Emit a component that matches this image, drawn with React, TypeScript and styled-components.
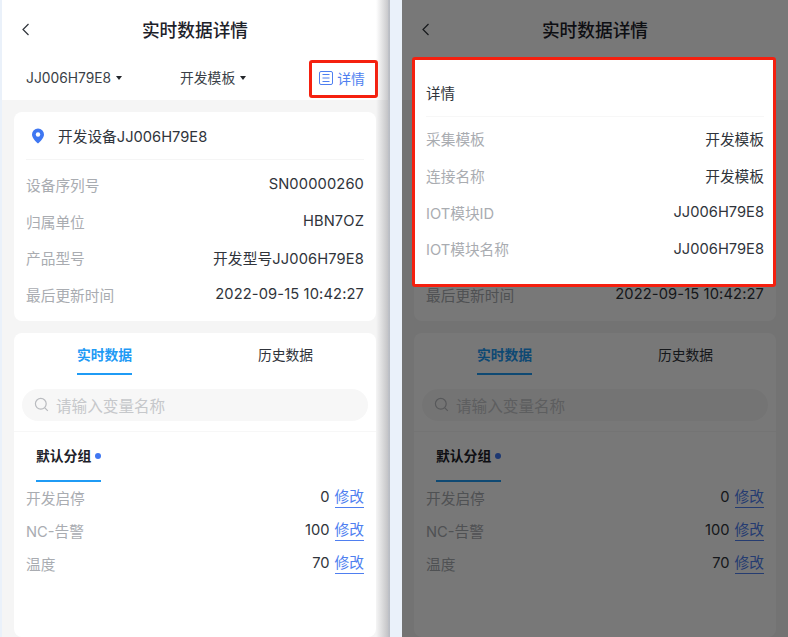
import { type FC } from "react";
import styled, { createGlobalStyle } from "styled-components";

const GlobalStyle = createGlobalStyle`
  html, body {
    margin: 0;
    padding: 0;
    width: 788px;
    height: 637px;
    overflow: hidden;
    background: #eaf1fa;
    font-family: Inter, "Noto Sans CJK SC", "Noto Sans", sans-serif;
  }
`;

const Screens = styled.div`
  display: flex;
  gap: 14px;
  height: 637px;
  padding-left: 2px;
`;

const Phone = styled.div`
  position: relative;
  width: 386px;
  height: 637px;
  flex: none;
  background: #f5f5f5;
  display: flex;
  flex-direction: column;
`;

const RightShade = styled.div`
  position: absolute;
  top: 0;
  right: -2px;
  width: 14px;
  height: 100%;
  background: linear-gradient(90deg, rgba(150, 150, 155, 0), rgba(150, 150, 155, 0.6));
`;

const Head = styled.div`
  background: #fff;
  flex: none;
`;

const TitleBar = styled.div`
  height: 58px;
  display: flex;
  align-items: center;
  justify-content: center;
  position: relative;
`;

const BackIcon = styled.svg`
  position: absolute;
  left: 19px;
  top: 23px;
  width: 10px;
  height: 13px;
`;

const Title = styled.div`
  font-size: 17.7px;
  font-weight: 500;
  color: #1d2129;
`;

const FilterBar = styled.div`
  height: 42px;
  display: flex;
  align-items: center;
  padding-left: 24px;
  padding-right: 10px;
`;

const Filter = styled.div<{ $width: number }>`
  width: ${({ $width }) => $width}px;
  display: flex;
  align-items: center;
  gap: 5px;
  font-size: 13.8px;
  line-height: 20px;
  margin-top: -2px;
  color: #3a3f47;
`;

const Caret = styled.span`
  width: 0;
  height: 0;
  border-left: 3px solid transparent;
  border-right: 3px solid transparent;
  border-top: 4px solid #23262b;
`;

const DetailButton = styled.div<{ $marked?: boolean }>`
  margin-left: auto;
  width: 69px;
  height: 38px;
  box-sizing: border-box;
  border: 3px solid ${({ $marked }) => ($marked ? "#f5200f" : "transparent")};
  border-radius: 3px;
  padding: 0 3px 3px 0;
  display: flex;
  align-items: center;
  justify-content: center;
  gap: 4px;
  font-size: 13.8px;
  color: #4f7ff0;
`;

const Body = styled.div`
  padding: 12px 12px 0;
  display: flex;
  flex-direction: column;
  gap: 12px;
  flex: 1;
`;

const Card = styled.div<{ $grow?: boolean }>`
  background: #fff;
  border-radius: 8px;
  flex: ${({ $grow }) => ($grow ? 1 : "none")};
`;

const InfoCard = styled(Card)`
  padding: 0 12px 8px;
`;

const Location = styled.div`
  height: 47px;
  margin-bottom: 6px;
  display: flex;
  align-items: center;
  gap: 13px;
  padding-left: 5px;
  border-bottom: 1px solid #f5f5f5;
  font-size: 14.7px;
  color: #30343b;
`;

const Row = styled.div`
  height: 36.7px;
  display: flex;
  align-items: center;
  justify-content: space-between;
  font-size: 14.7px;
`;

const Label = styled.span`
  color: #a9acb1;
`;

const Value = styled.span`
  color: #30343b;
`;

const InfoValue = styled(Value)`
  letter-spacing: 0.12px;
`;

const Tabs = styled.div`
  display: flex;
  height: 42px;
`;

const Tab = styled.div`
  flex: 1;
  display: flex;
  justify-content: center;
`;

const TabLabel = styled.div<{ $active?: boolean }>`
  height: 42px;
  box-sizing: border-box;
  padding-top: 12px;
  font-size: 13.8px;
  line-height: 20px;
  font-weight: ${({ $active }) => ($active ? 600 : 400)};
  color: ${({ $active }) => ($active ? "#1f9bf5" : "#30343b")};
  border-bottom: ${({ $active }) => ($active ? "2px solid #1f9bf5" : "none")};
`;

const SearchWrap = styled.div`
  padding: 14px 8px 10px;
  border-bottom: 1px solid #f7f7f7;
`;

const Search = styled.div`
  height: 32px;
  border-radius: 16px;
  background: #f7f7f7;
  display: flex;
  align-items: center;
  gap: 7px;
  padding-left: 12px;
  font-size: 15.6px;
  color: #c6c8cb;
`;

const GroupTab = styled.div`
  margin-left: 22px;
  width: 65px;
  height: 50px;
  box-sizing: border-box;
  padding-top: 14px;
  border-bottom: 2px solid #1f9bf5;
  display: flex;
  align-items: flex-start;
  gap: 4px;
  font-size: 13.8px;
  line-height: 20px;
  font-weight: 600;
  color: #1d2129;
  white-space: nowrap;
`;

const GroupDot = styled.span`
  width: 6px;
  height: 6px;
  margin-top: 7px;
  border-radius: 50%;
  background: #3f77f2;
  flex: none;
`;

const VarList = styled.div`
  margin-top: -1px;
  padding: 0 12px;
`;

const VarRow = styled(Row)`
  height: 33px;
`;

const VarValue = styled.div`
  display: flex;
  align-items: center;
  gap: 5px;
`;

const EditLink = styled.span`
  color: #4f7ff0;
  line-height: 20px;
  border-bottom: 1px solid #4f7ff0;
`;

const Overlay = styled.div`
  position: absolute;
  inset: 0;
  background: rgba(0, 0, 0, 0.53);
`;

const DetailPopup = styled.div`
  position: absolute;
  left: 10px;
  top: 57px;
  width: 364px;
  height: 230px;
  box-sizing: border-box;
  background: #fff;
  border: 3px solid #f5200f;
  border-radius: 3px;
  padding: 0 9px 0 11px;
`;

const PopupTitle = styled.div`
  height: 57px;
  padding-top: 9px;
  box-sizing: border-box;
  display: flex;
  align-items: center;
  border-bottom: 1px solid #f7f7f7;
  font-size: 14.5px;
  color: #30343b;
`;

const PopupList = styled.div`
  padding-top: 3.4px;
`;

const Chevron: FC = () => (
  <BackIcon viewBox="0 0 10 13" fill="none">
    <path d="M7.5 1 2 6.5 7.5 12" stroke="#30343b" strokeWidth="1.2" />
  </BackIcon>
);

const ListIcon: FC = () => (
  <svg width="14" height="14" viewBox="0 0 14 14" fill="none" stroke="#4f7ff0">
    <rect x="0.5" y="0.5" width="13" height="13" rx="1.5" />
    <path d="M3.5 3.5h7M3.5 7h7M3.5 10.5h7" />
  </svg>
);

const PinIcon: FC = () => (
  <svg width="14" height="16" viewBox="0 0 14 16">
    <path
      d="M7 0.5a6 6 0 0 1 6 6c0 3.6-3.6 6.8-6 9-2.4-2.2-6-5.4-6-9a6 6 0 0 1 6-6Z"
      fill="#3f77f2"
    />
    <circle cx="7" cy="6.5" r="2.2" fill="#fff" />
  </svg>
);

const SearchIcon: FC = () => (
  <svg width="15" height="15" viewBox="0 0 15 15" fill="none" stroke="#b9bbbf" strokeWidth="1.2">
    <circle cx="6.8" cy="6.8" r="5.4" />
    <path d="m10.8 10.8 3 3" />
  </svg>
);

const InfoRows = [
  ["设备序列号", "SN00000260"],
  ["归属单位", "HBN7OZ"],
  ["产品型号", "开发型号JJ006H79E8"],
  ["最后更新时间", "2022-09-15 10:42:27"],
];

const Variables = [
  ["开发启停", "0"],
  ["NC-告警", "100"],
  ["温度", "70"],
];

const PopupRows = [
  ["采集模板", "开发模板"],
  ["连接名称", "开发模板"],
  ["IOT模块ID", "JJ006H79E8"],
  ["IOT模块名称", "JJ006H79E8"],
];

const Screen: FC<{ marked?: boolean }> = ({ marked }) => (
  <>
    <Head>
      <TitleBar>
        <Chevron />
        <Title>实时数据详情</Title>
      </TitleBar>
      <FilterBar>
        <Filter $width={154}>
          JJ006H79E8 <Caret />
        </Filter>
        <Filter $width={112}>
          开发模板 <Caret />
        </Filter>
        <DetailButton $marked={marked}>
          <ListIcon />
          详情
        </DetailButton>
      </FilterBar>
    </Head>
    <Body>
      <InfoCard>
        <Location>
          <PinIcon />
          开发设备JJ006H79E8
        </Location>
        {InfoRows.map(([label, value]) => (
          <Row key={label}>
            <Label>{label}</Label>
            <InfoValue>{value}</InfoValue>
          </Row>
        ))}
      </InfoCard>
      <Card $grow>
        <Tabs>
          <Tab>
            <TabLabel $active>实时数据</TabLabel>
          </Tab>
          <Tab>
            <TabLabel>历史数据</TabLabel>
          </Tab>
        </Tabs>
        <SearchWrap>
          <Search>
            <SearchIcon />
            请输入变量名称
          </Search>
        </SearchWrap>
        <GroupTab>
          默认分组
          <GroupDot />
        </GroupTab>
        <VarList>
          {Variables.map(([label, value]) => (
            <VarRow key={label}>
              <Label>{label}</Label>
              <VarValue>
                <Value>{value}</Value>
                <EditLink>修改</EditLink>
              </VarValue>
            </VarRow>
          ))}
        </VarList>
      </Card>
    </Body>
  </>
);

const App: FC = () => (
  <>
    <GlobalStyle />
    <Screens>
      <Phone>
        <Screen marked />
        <RightShade />
      </Phone>
      <Phone>
        <Screen />
        <Overlay />
        <DetailPopup>
          <PopupTitle>详情</PopupTitle>
          <PopupList>
            {PopupRows.map(([label, value]) => (
              <Row key={label}>
                <Label>{label}</Label>
                <Value>{value}</Value>
              </Row>
            ))}
          </PopupList>
        </DetailPopup>
      </Phone>
    </Screens>
  </>
);

export default App;
